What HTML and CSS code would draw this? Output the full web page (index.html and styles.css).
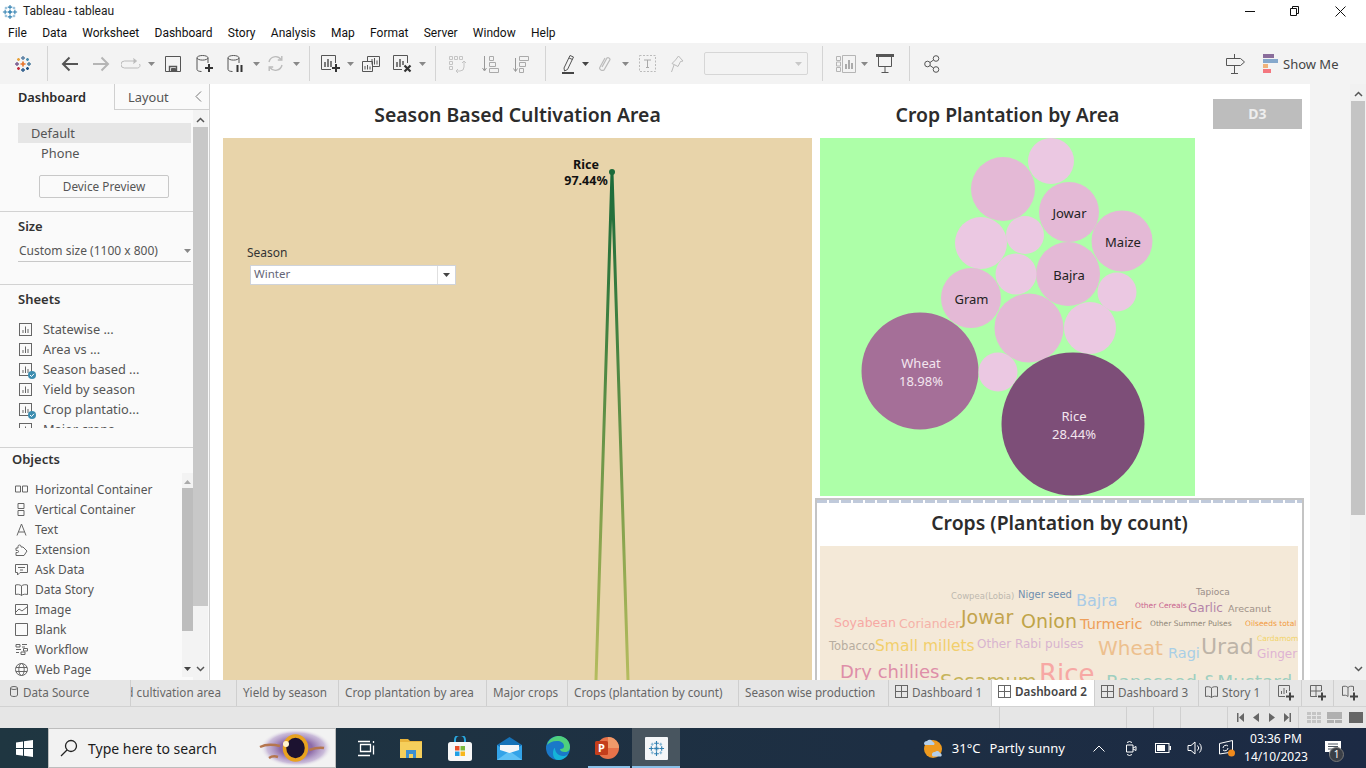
FILE: index.html
```html
<!DOCTYPE html>
<html>
<head>
	<meta charset="utf-8">
	<title>Tableau - tableau</title>
	<link rel="stylesheet" href="styles.css">
</head>
<body>
<svg class="defs" width="0" height="0">
	<symbol id="logo-blue" viewBox="0 0 18 18">
		<g fill="none" stroke="#2f7fb0" stroke-width="1.2">
			<path d="M9 1v5M6.5 3.500h5M9 12v5M6.5 14.500h5M1 9h5M3.500 6.500v5M12 9h5M14.500 6.500v5"/>
			<path d="M9 6.500v5M6.500 9h5" stroke-width="1.6"/>
			<path d="M4.500 3v3M3 4.500h3M13.500 3v3M12 4.500h3M4.500 12v3M3 13.500h3M13.500 12v3M12 13.500h3" stroke="#7fb2d2"/>
		</g>
	</symbol>
	<symbol id="sheet" viewBox="0 0 13 13">
		<rect x=".5" y=".5" width="12" height="12" fill="none" stroke="#666"/>
		<path d="M4 10V7M6.500 10V3.500M9 10V6" fill="none" stroke="#666"/>
	</symbol>
	<symbol id="dash" viewBox="0 0 13 13">
		<rect x=".5" y=".5" width="12" height="12" fill="none" stroke="#666"/>
		<path d="M6.500 1v11M1 6.500h11" fill="none" stroke="#666"/>
	</symbol>
	<symbol id="caret" viewBox="0 0 7 4">
		<path d="M0 0h7L3.500 4z"/>
	</symbol>
	<symbol id="tick" viewBox="0 0 8 8">
		<circle cx="4" cy="4" r="4" fill="#3c8db0"/>
		<path d="M2 4l1.500 1.500L6 2.800" fill="none" stroke="#fff"/>
	</symbol>
</svg>

<div class="titlebar">
	<svg class="title-logo"><use href="#logo-blue"/></svg>
	<span class="title-text">Tableau - tableau</span>
	<span class="win-btns">
		<svg width="10" height="10" viewBox="0 0 10 10"><path d="M0 5.500h10" stroke="#111"/></svg>
		<svg width="10" height="10" viewBox="0 0 10 10"><path d="M.5 2.500h6v7h-6zM2.500 2.500v-2h6v7h-2" fill="none" stroke="#111"/></svg>
		<svg width="11" height="11" viewBox="0 0 11 11"><path d="M.5.500l10 10M10.500.500l-10 10" stroke="#111"/></svg>
	</span>
</div>

<nav class="menubar">
	<span>File</span><span>Data</span><span>Worksheet</span><span>Dashboard</span><span>Story</span><span>Analysis</span><span>Map</span><span>Format</span><span>Server</span><span>Window</span><span>Help</span>
</nav>

<div class="toolbar">
	<span class="ic w30 first">
		<svg width="18" height="18" viewBox="0 0 18 18" fill="none" stroke-width="1.4">
			<path d="M9 1v4M7 3h4" stroke="#5a7fa3"/><path d="M9 13v4M7 15h4" stroke="#2f5d8c"/>
			<path d="M1 9h4M3 7v4" stroke="#7a5c8e"/><path d="M13 9h4M15 7v4" stroke="#4f7f9f"/>
			<path d="M9 6.500v5M6.500 9h5" stroke="#e8762b" stroke-width="1.700"/>
			<path d="M4.500 3v3M3 4.500h3" stroke="#e8a23b"/><path d="M13.500 3v3M12 4.500h3" stroke="#4a8fb0"/>
			<path d="M4.500 12v3M3 13.500h3" stroke="#c72f3f"/><path d="M13.500 12v3M12 13.500h3" stroke="#1f4f7f"/>
		</svg>
	</span>
	<i class="sep m9"></i>
	<span class="ic w30"><svg width="18" height="16" viewBox="0 0 18 16" fill="none" stroke="#555" stroke-width="2"><path d="M17 8H2M8.500 1.500L2 8l6.500 6.500"/></svg></span>
	<span class="ic w32 off"><svg width="18" height="16" viewBox="0 0 18 16" fill="none" stroke="#b5b5b5" stroke-width="2"><path d="M1 8h15M9.500 1.500L16 8l-6.500 6.500"/></svg></span>
	<span class="ic w28 off"><svg width="20" height="12" viewBox="0 0 20 12" fill="none" stroke="#bbb"><path d="M14 3H3.500a2.500 2.500 0 0 0 0 7h13a2.500 2.500 0 0 0 2-4"/><path d="M12.500.500L15.500 3l-3 2.500" fill="#bbb"/></svg></span>
	<span class="ic w12 off"><svg class="dd"><use href="#caret"/></svg></span>
	<span class="ic w32"><svg width="16" height="16" viewBox="0 0 16 16" fill="none" stroke="#555"><path d="M.5.500h15v15H.5z"/><path d="M4.500 15.500v-5h7v5" stroke-width="1.400"/><path d="M6.500 12.500h4v3h-4z" fill="#555"/></svg></span>
	<span class="ic w32"><svg width="18" height="18" viewBox="0 0 18 18" fill="none" stroke="#555"><ellipse cx="6.500" cy="2.800" rx="5.500" ry="2.300"/><path d="M1 3v11.500c0 1.200 2 2 4.500 2M12 3v5"/><path d="M13 9v8M9 13h8" stroke="#333" stroke-width="2"/></svg></span>
	<span class="ic w30"><svg width="18" height="18" viewBox="0 0 18 18" fill="none" stroke="#555"><ellipse cx="6.500" cy="2.800" rx="5.500" ry="2.300"/><path d="M1 3v11.500c0 1.200 2 2 4.500 2M12 3v5"/><path d="M10.500 10v7M14.500 10v7" stroke="#333" stroke-width="2"/></svg></span>
	<span class="ic w10"><svg class="dd"><use href="#caret"/></svg></span>
	<span class="ic w28 off"><svg width="17" height="17" viewBox="0 0 17 17" fill="none" stroke="#bbb" stroke-width="1.400"><path d="M2 7a6.700 6.700 0 0 1 12-2.500M15 10a6.700 6.700 0 0 1-12 2.500"/><path d="M14.800 1v4h-4M2.200 16v-4h4"/></svg></span>
	<span class="ic w14 off"><svg class="dd"><use href="#caret"/></svg></span>
	<i class="sep m6"></i>
	<span class="ic w30"><svg width="20" height="18" viewBox="0 0 20 18" fill="none" stroke="#555"><path d="M10 14.500H.5V.500h14V8"/><path d="M4 12V7M7 12V4M10 12V6" stroke-width="1.500"/><path d="M15 9v8M11 13h8" stroke="#333" stroke-width="2"/></svg></span>
	<span class="ic w8"><svg class="dd"><use href="#caret"/></svg></span>
	<span class="ic w34"><svg width="18" height="16" viewBox="0 0 18 16" fill="none" stroke="#555"><path d="M5.500 5V.500h12v10H11"/><path d="M.500 5.500h10v10H.500z" fill="#f3f3f3"/><path d="M3 13.500V10M5.500 13.500V9M8 13.500v-3M10 8.500V3M12.500 8.500V2M15 8.500V4.500"/></svg></span>
	<span class="ic w28"><svg width="19" height="18" viewBox="0 0 19 18" fill="none" stroke="#555"><path d="M9 14.500H.5V.500h14V8"/><path d="M4 12V7M7 12V4M10 10V6" stroke-width="1.500"/><path d="M11.500 10.500l6 6M17.500 10.500l-6 6" stroke="#333" stroke-width="2.200"/></svg></span>
	<span class="ic w12"><svg class="dd"><use href="#caret"/></svg></span>
	<i class="sep m7"></i>
	<span class="ic w28 off"><svg width="18" height="18" viewBox="0 0 18 18" fill="none" stroke="#c4c4c4"><path d="M1.500 1.500h3v3h-3zM6.500 1.500h3v3h-3zM11.500 1.500h3v3h-3zM1.500 6.500h3v3h-3zM1.500 11.500h3v3h-3z"/><path d="M16 6v6a4 4 0 0 1-4 4H8M14 8l2-2 2 2M10 14l-2 2 2 2"/></svg></span>
	<span class="ic w38 off"><svg width="17" height="18" viewBox="0 0 17 18" fill="none" stroke="#aaa"><path d="M2.500 1v14M.5 13l2 3 2-3" stroke="#999"/><path d="M7.500 1.500h4v4h-4zM7.500 7.500h6v4h-6zM7.500 13.500h9v4h-9z"/></svg></span>
	<span class="ic w24 off"><svg width="17" height="18" viewBox="0 0 17 18" fill="none" stroke="#aaa"><path d="M2.500 3v13M.5 13.500l2 3 2-3" stroke="#999"/><path d="M6.500 1.500h9v4h-9zM6.500 7.500h6v4h-6zM6.500 13.500h4v4h-4z"/></svg></span>
	<i class="sep m11"></i>
	<span class="ic w24"><svg width="14" height="20" viewBox="0 0 14 20" fill="none" stroke="#555"><path d="M3 14L9 1.500 12.500 3 6.500 15.500 3.500 17z"/><path d="M8 4l3.500 1.500"/><path d="M1 19h12" stroke="#444" stroke-width="2"/></svg></span>
	<span class="ic w10"><svg class="dd dark"><use href="#caret"/></svg></span>
	<span class="ic w30 off"><svg width="12" height="18" viewBox="0 0 12 18" fill="none" stroke="#bbb" stroke-width="1.200"><path d="M3 12l5-9a2 2 0 0 1 3 1.500L5 15a3 3 0 0 1-4.500-2L6 3"/></svg></span>
	<span class="ic w10 off"><svg class="dd"><use href="#caret"/></svg></span>
	<span class="ic w34 off"><svg width="17" height="17" viewBox="0 0 17 17" fill="none" stroke="#bbb"><rect x=".5" y=".5" width="16" height="16" stroke-dasharray="2 1.500"/><path d="M5 5h7M8.500 5v7.500M7 12.500h3" stroke="#aaa"/></svg></span>
	<span class="ic w26 off"><svg width="14" height="18" viewBox="0 0 14 18" fill="none" stroke="#bbb"><path d="M8.500 1l4.500 5-2.500.500-2.500 5-6-3 3.500-3.500z"/><path d="M4 10l-2.500 7"/></svg></span>
	<span class="tb-select"><svg class="dd light"><use href="#caret"/></svg></span>
	<i class="sep m14"></i>
	<span class="ic w26 off"><svg width="20" height="18" viewBox="0 0 20 18" fill="none" stroke="#b5b5b5"><path d="M.5 1.500h4v4h-4zM.5 7h4v4h-4zM.5 12.500h4v4h-4z"/><path d="M6.500.500h13v17h-13z"/><path d="M10 14V9M13 14V5M16 14V8" stroke="#999" stroke-width="1.600"/></svg></span>
	<span class="ic w10 off"><svg class="dd"><use href="#caret"/></svg></span>
	<span class="ic w32"><svg width="18" height="19" viewBox="0 0 18 19" fill="none" stroke="#555"><path d="M0 1.500h18" stroke-width="3"/><path d="M2.500 3v9.500h13V3M9 12.500v6M5.500 18.500h7"/></svg></span>
	<i class="sep m8"></i>
	<span class="ic w30 share"><svg width="16" height="18" viewBox="0 0 16 18" fill="none" stroke="#555"><circle cx="3.500" cy="9" r="2.800"/><circle cx="12" cy="3.500" r="2.800"/><circle cx="12" cy="14.500" r="2.800"/><path d="M6 7.500l3.500-2.500M6 10.500l3.500 2.500"/></svg></span>
	<span class="tb-space"></span>
	<span class="ic w30"><svg width="19" height="20" viewBox="0 0 19 20" fill="none" stroke="#555"><path d="M.5 4.500h14l4 3.500-4 3.500H.5z"/><path d="M8.500 0v4.500M8.500 11.500v8M5 19.500h7"/></svg></span>
	<span class="showme">
		<span class="showme-bars"><i class="b1"></i><i class="b2"></i><i class="b3"></i><i class="b4"></i></span>
		Show Me
	</span>
</div>

<div class="main">
	<aside class="side">
		<div class="side-tabs">
			<span class="side-tab active">Dashboard</span>
			<span class="side-tab">Layout</span>
			<svg class="side-chev" width="7" height="11" viewBox="0 0 7 11"><path d="M6 .500L1 5.500l5 5" fill="none" stroke="#777"/></svg>
		</div>
		<div class="side-body">
			<div class="side-main">
				<section class="sec sec-device">
					<div class="dev-row selected">Default</div>
					<div class="dev-row indent">Phone</div>
					<button class="dev-btn">Device Preview</button>
				</section>
				<section class="sec sec-size">
					<h3>Size</h3>
					<div class="size-row">Custom size (1100 x 800)<svg class="dd"><use href="#caret"/></svg></div>
				</section>
				<section class="sec sec-sheets">
					<h3>Sheets</h3>
					<ul class="sheet-list">
						<li><svg class="si"><use href="#sheet"/></svg>Statewise ...</li>
						<li><svg class="si"><use href="#sheet"/></svg>Area vs ...</li>
						<li><span class="si-wrap"><svg class="si"><use href="#sheet"/></svg><svg class="tick"><use href="#tick"/></svg></span>Season based ...</li>
						<li><svg class="si"><use href="#sheet"/></svg>Yield by season</li>
						<li><span class="si-wrap"><svg class="si"><use href="#sheet"/></svg><svg class="tick"><use href="#tick"/></svg></span>Crop plantatio...</li>
						<li><svg class="si"><use href="#sheet"/></svg>Major crops</li>
					</ul>
				</section>
				<section class="sec-objects">
					<h3>Objects</h3>
					<div class="obj-wrap">
						<ul class="obj-list">
							<li><svg width="13" height="13" viewBox="0 0 13 13" fill="none" stroke="#666"><path d="M.5 3h5v6h-5zM7.500 3h5v6h-5z"/></svg>Horizontal Container</li>
							<li><svg width="13" height="13" viewBox="0 0 13 13" fill="none" stroke="#666"><path d="M3 .500h6v5H3zM3 7.500h6v5H3z"/></svg>Vertical Container</li>
							<li><svg width="13" height="13" viewBox="0 0 13 13" fill="none" stroke="#666"><path d="M2 12.500L6.500 1l4.500 11.500M3.500 9h6"/></svg>Text</li>
							<li><svg width="13" height="13" viewBox="0 0 13 13" fill="none" stroke="#666"><path d="M1 5h2V3.500a1.500 1.500 0 0 1 3 0V4h2l4 4-3 4.500H1v-3h1.500a1 1 0 0 0 0-2H1z"/></svg>Extension</li>
							<li><svg width="13" height="13" viewBox="0 0 13 13" fill="none" stroke="#666"><path d="M.5 1.500h12v8H5L2.500 12V9.500h-2zM3 4.500h7M5 7h3"/></svg>Ask Data</li>
							<li><svg width="13" height="13" viewBox="0 0 13 13" fill="none" stroke="#666"><path d="M6.500 3C5 1.500 2.500 1.500.5 2v9.500c2-.5 4.500-.5 6 1 1.500-1.500 4-1.500 6-1V2C10.500 1.500 8 1.500 6.500 3zM6.500 3v9.500"/></svg>Data Story</li>
							<li><svg width="13" height="13" viewBox="0 0 13 13" fill="none" stroke="#666"><path d="M.5 1.500h12v10H.5zM1 9l3-3 3 2 5-4"/></svg>Image</li>
							<li><svg width="13" height="13" viewBox="0 0 13 13" fill="none" stroke="#666"><path d="M.5.500h12v12H.5z"/></svg>Blank</li>
							<li><svg width="13" height="13" viewBox="0 0 13 13" fill="none" stroke="#666"><path d="M1 1.500h4v2.500H1zM7 1.500h5M7 4h3M1 6.500h5M8.500 5.500h4v2.500h-4zM1 9.500h3M6 9h4v2.500H6z"/></svg>Workflow</li>
							<li><svg width="13" height="13" viewBox="0 0 13 13" fill="none" stroke="#666"><circle cx="6.500" cy="6.500" r="6"/><ellipse cx="6.500" cy="6.500" rx="2.700" ry="6"/><path d="M1 4.500h11M1 8.500h11"/></svg>Web Page</li>
						</ul>
						<div class="obj-scroll">
							<svg class="dd up"><use href="#caret"/></svg>
							<i class="obj-thumb"></i>
							<svg class="dd dark"><use href="#caret"/></svg>
						</div>
					</div>
				</section>
			</div>
			<div class="side-scroll">
				<svg width="9" height="6" viewBox="0 0 9 6"><path d="M1 5l3.500-3.500L8 5" fill="none" stroke="#555" stroke-width="1.500"/></svg>
				<i class="side-thumb"></i>
				<svg width="9" height="6" viewBox="0 0 9 6"><path d="M1 1l3.500 3.500L8 1" fill="none" stroke="#555" stroke-width="1.500"/></svg>
			</div>
		</div>
	</aside>

	<div class="canvas">
		<div class="col-left">
			<h2 class="viz-title">Season Based Cultivation Area</h2>
			<div class="beige">
				<svg class="line-chart" width="589" height="542" viewBox="0 0 589 542">
					<defs>
						<linearGradient id="lineGrad" gradientUnits="userSpaceOnUse" x1="0" y1="34" x2="0" y2="542">
							<stop offset="0" stop-color="#1b6a3a"/>
							<stop offset=".3" stop-color="#3f8040"/>
							<stop offset=".7" stop-color="#86a34e"/>
							<stop offset="1" stop-color="#b5bc5e"/>
						</linearGradient>
					</defs>
					<polyline points="373,542 389,34 405,542" fill="none" stroke="url(#lineGrad)" stroke-width="3"/>
					<circle cx="389" cy="34" r="3" fill="#1b6a3a"/>
					<text class="peak" x="363" y="31" text-anchor="middle">Rice</text>
					<text class="peak" x="363" y="47" text-anchor="middle">97.44%</text>
				</svg>
				<div class="filter">
					<div class="filter-label">Season</div>
					<div class="filter-box"><span>Winter</span><i class="filter-btn"><svg class="dd dark"><use href="#caret"/></svg></i></div>
				</div>
			</div>
		</div>
		<div class="col-right">
			<div class="right-top">
				<div class="bubble-col">
					<h2 class="viz-title">Crop Plantation by Area</h2>
					<svg class="bubbles" width="375" height="358" viewBox="820 138 375 358">
						<circle class="light" cx="1051" cy="161" r="23"/>
						<circle class="mid" cx="1003" cy="189" r="32"/>
						<circle class="mid" cx="1069" cy="212" r="30"/>
						<circle class="mid" cx="1122" cy="241" r="30.500"/>
						<circle class="light" cx="981" cy="243" r="26"/>
						<circle class="light" cx="1025" cy="235" r="19"/>
						<circle class="mid" cx="1068" cy="274" r="32"/>
						<circle class="light" cx="1016" cy="274" r="20.500"/>
						<circle class="light" cx="1117" cy="292" r="19.500"/>
						<circle class="mid" cx="971" cy="298" r="30"/>
						<circle class="mid" cx="1029" cy="328" r="34.500"/>
						<circle class="light" cx="1090" cy="328" r="26"/>
						<circle class="wheat" cx="920" cy="371" r="58.500"/>
						<circle class="light" cx="998" cy="372" r="19.500"/>
						<circle class="rice" cx="1073" cy="424" r="71.500"/>
						<text class="bub" x="1069.500" y="217.500">Jowar</text>
						<text class="bub" x="1123" y="246.500">Maize</text>
						<text class="bub" x="1069" y="279.500">Bajra</text>
						<text class="bub" x="971.500" y="303.500">Gram</text>
						<text class="bub inv" x="921" y="368">Wheat</text>
						<text class="bub inv" x="921" y="386">18.98%</text>
						<text class="bub inv" x="1074" y="421">Rice</text>
						<text class="bub inv" x="1074" y="439">28.44%</text>
					</svg>
				</div>
				<div class="d3-btn">D3</div>
			</div>
			<div class="cloud-box">
				<div class="ticks"></div>
				<h2 class="viz-title cloud-title">Crops (Plantation by count)</h2>
				<svg class="cloud" width="478" height="134" viewBox="820 546 478 134">
					<text x="951" y="599" font-size="8.500" fill="#bdb8ae">Cowpea(Lobia)</text>
					<text x="1018" y="598" font-size="10" fill="#6f8fae">Niger seed</text>
					<text x="1076" y="606" font-size="16" fill="#a9cbe6">Bajra</text>
					<text x="1196" y="595" font-size="9" fill="#9a8e88">Tapioca</text>
					<text x="1135" y="608" font-size="7.500" fill="#c9648f">Other Cereals</text>
					<text x="1188" y="612" font-size="12" fill="#b383a8">Garlic</text>
					<text x="1228" y="612" font-size="9.500" fill="#9f9188">Arecanut</text>
					<text x="834" y="627" font-size="12.500" fill="#f7a8a4">Soyabean</text>
					<text x="899" y="628" font-size="12.500" fill="#f4b2a8">Coriander</text>
					<text x="961" y="624" font-size="19" fill="#c3a44e">Jowar</text>
					<text x="1021" y="628" font-size="19" fill="#bfa448">Onion</text>
					<text x="1080" y="629" font-size="14.500" fill="#ee9f5a">Turmeric</text>
					<text x="1150" y="626" font-size="7.500" fill="#8f8677">Other Summer Pulses</text>
					<text x="1245" y="626" font-size="7.500" fill="#f29a3e">Oilseeds total</text>
					<text x="829" y="650" font-size="11.500" fill="#b7ada0">Tobacco</text>
					<text x="875" y="651" font-size="15.500" fill="#f2cf6c">Small millets</text>
					<text x="977" y="648" font-size="12" fill="#d8b4cf">Other Rabi pulses</text>
					<text x="1098" y="655" font-size="20" fill="#edc08e">Wheat</text>
					<text x="1168" y="658" font-size="14.500" fill="#a9cfe6">Ragi</text>
					<text x="1201" y="654" font-size="22" fill="#bdb4a8">Urad</text>
					<text x="1257" y="641" font-size="7.500" fill="#f2d46a">Cardamom</text>
					<text x="1257" y="658" font-size="12" fill="#deb3d3">Ginger</text>
					<text x="840" y="678" font-size="18" fill="#de8ea8">Dry chillies</text>
					<text x="940" y="688" font-size="19.500" fill="#c6b45a">Sesamum</text>
					<text x="1039" y="683" font-size="26" fill="#f7a8a4">Rice</text>
					<text x="1106" y="688" font-size="18.500" fill="#9fcfc0">Rapeseed &amp;Mustard</text>
				</svg>
			</div>
		</div>
	</div>

	<div class="gutter"></div>
	<div class="page-scroll">
		<svg width="9" height="6" viewBox="0 0 9 6"><path d="M1 5l3.500-3.500L8 5" fill="none" stroke="#555" stroke-width="1.500"/></svg>
		<i class="page-thumb"></i>
		<svg width="9" height="6" viewBox="0 0 9 6"><path d="M1 1l3.500 3.500L8 1" fill="none" stroke="#555" stroke-width="1.500"/></svg>
	</div>
</div>

<div class="tabs">
	<div class="tab tab-ds"><svg width="8" height="11" viewBox="0 0 8 11" fill="none" stroke="#666"><ellipse cx="4" cy="2" rx="3.500" ry="1.500"/><path d="M.5 2v7c0 2 7 2 7 0V2"/></svg>Data Source</div>
	<div class="tab tab-clip">Season based cultivation area</div>
	<div class="tab">Yield by season</div>
	<div class="tab">Crop plantation by area</div>
	<div class="tab">Major crops</div>
	<div class="tab">Crops (plantation by count)</div>
	<div class="tab">Season wise production</div>
	<div class="tab"><svg class="tab-ic"><use href="#dash"/></svg>Dashboard 1</div>
	<div class="tab current"><svg class="tab-ic"><use href="#dash"/></svg>Dashboard 2</div>
	<div class="tab"><svg class="tab-ic"><use href="#dash"/></svg>Dashboard 3</div>
	<div class="tab"><svg width="13" height="13" viewBox="0 0 13 13" fill="none" stroke="#666"><path d="M6.500 3C5 1.500 2.500 1.500.5 2v9.500c2-.5 4.500-.5 6 1 1.500-1.500 4-1.500 6-1V2C10.500 1.500 8 1.500 6.500 3zM6.500 3v9.500"/></svg>Story 1</div>
	<div class="tab tab-add"><svg width="16" height="16" viewBox="0 0 16 16" fill="none" stroke="#666"><path d="M7 11.500H.5V.500h11V6"/><path d="M3.500 9V6M6 9V3M8.500 8V5"/><path d="M12 7.500v8M8 11.500h8" stroke="#444" stroke-width="2"/></svg></div>
	<div class="tab tab-add"><svg width="16" height="16" viewBox="0 0 16 16" fill="none" stroke="#666"><path d="M7 11.500H.5V.500h11V6M6 1v10M1 6h10"/><path d="M12 7.500v8M8 11.500h8" stroke="#444" stroke-width="2"/></svg></div>
	<div class="tab tab-add"><svg width="16" height="16" viewBox="0 0 16 16" fill="none" stroke="#666"><path d="M6 2.500C4.500 1 2.500 1 .5 1.500v9c2-.5 4-.5 5.500 1M6 2.500C7.500 1 9.500 1 11.500 1.500V6M6 2.500v9"/><path d="M12 7.500v8M8 11.500h8" stroke="#444" stroke-width="2"/></svg></div>
</div>

<div class="status">
	<div></div><div></div><div></div><div></div><div></div>
	<div class="st-nav">
		<svg width="7" height="9" viewBox="0 0 7 9"><path d="M0 0h1.500v9H0zM7 0v9L2 4.500z" fill="#666"/></svg>
		<svg width="6" height="9" viewBox="0 0 6 9"><path d="M6 0v9L0 4.500z" fill="#666"/></svg>
		<svg width="6" height="9" viewBox="0 0 6 9"><path d="M0 0v9l6-4.500z" fill="#666"/></svg>
		<svg width="7" height="9" viewBox="0 0 7 9"><path d="M0 0v9l5-4.500zM5.500 0H7v9H5.500z" fill="#666"/></svg>
	</div>
	<div class="st-view">
		<svg width="14" height="11" viewBox="0 0 14 11" fill="#c4c4c4"><path d="M0 0h4v3H0zM5 0h4v3H5zM10 0h4v3h-4zM0 4h4v3H0zM5 4h4v3H5zM10 4h4v3h-4zM0 8h4v3H0zM5 8h4v3H5zM10 8h4v3h-4z"/></svg>
		<svg width="15" height="11" viewBox="0 0 15 11" fill="#b0b0b0"><path d="M0 0h15v7H0zM0 8h7v3H0zM8 8h7v3H8z"/></svg>
		<i class="view-full"></i>
	</div>
</div>

<footer class="taskbar">
	<span class="start">
		<svg width="17" height="17" viewBox="0 0 17 17" fill="#fff"><path d="M0 2.400l7-1v6.700H0zM8 1.300L17 0v8.100H8zM0 9h7v6.700l-7-1zM8 9h9v8l-9-1.300z"/></svg>
	</span>
	<div class="search">
		<svg width="18" height="18" viewBox="0 0 18 18" fill="none" stroke="#222" stroke-width="1.300"><circle cx="11" cy="7" r="5.500"/><path d="M7 11l-6 6"/></svg>
		<span>Type here to search</span>
		<svg class="bing" width="73" height="38" viewBox="0 0 73 38">
			<defs>
				<radialGradient id="bingHalo">
					<stop offset=".45" stop-color="#8d6ba8"/>
					<stop offset=".8" stop-color="#b9a4cf" stop-opacity=".7"/>
					<stop offset="1" stop-color="#f2f2f2" stop-opacity="0"/>
				</radialGradient>
			</defs>
			<ellipse cx="37" cy="19" rx="36" ry="19" fill="url(#bingHalo)"/>
			<path d="M1 18c6-3 12-3 20-1M50 21c6-2 10-3 15-2M10 29c3-2 6-2 9-1" stroke="#b5764f" stroke-width="2.500" fill="none"/>
			<ellipse cx="36.500" cy="19" rx="11" ry="12" fill="#1c1230" stroke="#e9a21f" stroke-width="3.500"/>
			<circle cx="27" cy="15" r="3" fill="#fff3cf"/>
		</svg>
	</div>
	<span class="tb-app w-task">
		<svg width="18" height="17" viewBox="0 0 18 17" fill="none" stroke="#fff"><path d="M3.500 4.500h10v7h-10zM1 1.500h12M1 15.500h12M16.500 1v2M16.500 5.500v9" stroke-width="1.300"/></svg>
	</span>
	<span class="tb-app w-folder">
		<svg width="22" height="20" viewBox="0 0 22 20"><path d="M0 1h8l2 2h12v4H0z" fill="#e8b33a"/><path d="M0 4h22v16H0z" fill="#f5cf5c"/><path d="M6 12h10v8H6z" fill="#3d8fd1"/><path d="M9 16h4v4H9z" fill="#f5cf5c"/></svg>
	</span>
	<span class="tb-app w-store">
		<svg width="24" height="25" viewBox="0 0 24 25"><path d="M7 7V4a5 5 0 0 1 10 0v3" fill="none" stroke="#29a8e0" stroke-width="2"/><rect y="6" width="24" height="19" rx="2.500" fill="#f7f7f7"/><path d="M7 10h4.500v4.500H7z" fill="#e8502a"/><path d="M12.500 10H17v4.500h-4.500z" fill="#7cb83b"/><path d="M7 15.500h4.500V20H7z" fill="#1fa0e6"/><path d="M12.500 15.500H17V20h-4.500z" fill="#f8b71c"/></svg>
	</span>
	<span class="tb-app w-mail">
		<svg width="25" height="23" viewBox="0 0 25 23"><path d="M0 8L12.500 0 25 8v15H0z" fill="#1572b8"/><path d="M0 8l12.500 8L25 8v15H0z" fill="#33a3e8"/><path d="M0 23l12.500-9L25 23z" fill="#5fc1f5"/><path d="M3 8h19v5l-9.500 3L3 13z" fill="#f4f6f8"/></svg>
	</span>
	<span class="tb-app w-edge">
		<svg width="24" height="24" viewBox="0 0 24 24"><circle cx="12" cy="12" r="12" fill="#1a78c8"/><path d="M1 9C3 2 9 0 13 0c6 0 11 5 11 11 0 3-2 5-5 5-3 0-5-1-5-3 3 0 4-1 4-3C18 7 15 5 11 5 6 5 3 7 1 9z" fill="#4fd07d"/><path d="M9 12c0 4 3 8 8 8 2 0 4-.5 5-2-2 4-6 6-10 6-3 0-5-3-5-7 0-3 1-5 2-5z" fill="#15b3d8"/></svg>
	</span>
	<span class="tb-app w-ppt">
		<svg width="24" height="24" viewBox="0 0 24 24"><circle cx="13" cy="12" r="11" fill="#e8734a"/><path d="M13 1a11 11 0 0 1 11 11H13z" fill="#f09a6a"/><rect y="5" width="13" height="14" rx="1.500" fill="#c43e1c"/><text class="ppt-p" x="6.500" y="16">P</text></svg>
	</span>
	<span class="tb-app w-tab">
		<svg class="tab-logo" width="23" height="23" viewBox="0 0 23 23"><rect width="23" height="23" rx="1" fill="#f4f6f8"/><use href="#logo-blue" x="3" y="3" width="17" height="17"/></svg>
	</span>
	<span class="tb-fill"></span>
	<span class="weather">
		<svg width="20" height="22" viewBox="0 0 20 22"><circle cx="10" cy="12" r="9" fill="#ee9a1f"/><path d="M1 7a3 3 0 0 1 3-3 3.500 3.500 0 0 1 6 1 2 2 0 0 1 1 3H2a2 2 0 0 1-1-1z" fill="#b5cfe8"/><path d="M9 18a2.500 2.500 0 0 1 3-3 3 3 0 0 1 5 1 2 2 0 0 1 1 3.500h-8a2 2 0 0 1-1-1.500z" fill="#b5cfe8"/></svg>
		<span class="w-temp">31°C</span><span class="w-desc">Partly sunny</span>
	</span>
	<span class="tray t-up"><svg width="12" height="7" viewBox="0 0 12 7"><path d="M.5 6.500L6 1l5.500 5.500" fill="none" stroke="#fff"/></svg></span>
	<span class="tray t-meet"><svg width="12" height="17" viewBox="0 0 12 17" fill="none" stroke="#fff"><path d="M1.500 5h6.500v7H1.500zM8 8l3-1.500v4L8 9M2 2.500Q4.500.500 7 2.500M2 14.500q2.500 2 5 0"/></svg></span>
	<span class="tray t-batt"><svg width="16" height="10" viewBox="0 0 16 10"><rect x=".5" y=".5" width="13.500" height="9" fill="none" stroke="#fff"/><rect x="2" y="2" width="8" height="6" fill="#fff"/><path d="M14.500 3H16v4h-1.500z" fill="#fff"/></svg></span>
	<span class="tray t-vol"><svg width="16" height="14" viewBox="0 0 16 14" fill="none" stroke="#fff"><path d="M1 4.500h3L8 1v12L4 9.500H1zM10.500 4.500a3.500 3.500 0 0 1 0 5M12.500 2.500a6.500 6.500 0 0 1 0 9"/></svg></span>
	<span class="tray t-net"><svg width="16" height="17" viewBox="0 0 16 17"><path d="M.5 3.500L13.500.500v11.500L.5 14z" fill="none" stroke="#fff"/><path d="M4 8a3 3 0 0 1 5-2M9 8a3 3 0 0 1-5 2" fill="none" stroke="#fff"/><circle cx="12.500" cy="13" r="3.500" fill="#f08a1c"/></svg></span>
	<span class="clock"><span>03:36 PM</span><span>14/10/2023</span></span>
	<span class="notif">
		<svg width="16" height="15" viewBox="0 0 16 15"><path d="M0 0h16v11H7l-3 4v-4H0z" fill="#fff"/><path d="M3 3h10M3 5.500h10M3 8h7" stroke="#4a5560"/></svg>
		<i class="notif-badge">1</i>
	</span>
</footer>
</body>
</html>
```

FILE: styles.css
```css
* { box-sizing: border-box; }

html, body {
	margin: 0;
	padding: 0;
	width: 1366px;
	height: 768px;
	overflow: hidden;
}

body {
	display: flex;
	flex-direction: column;
	font-family: "Noto Sans", "Open Sans", sans-serif;
	background: #fff;
}

.defs { position: absolute; }

i { font-style: normal; display: block; }

h2, h3, ul { margin: 0; padding: 0; }
ul { list-style: none; }

/* caret used all over */
.dd { width: 7px; height: 4px; fill: #888; flex: none; }
.dd.dark { fill: #444; }
.dd.light { fill: #c8c8c8; }
.dd.up { transform: rotate(180deg); fill: #aaa; }

/* title bar */
.titlebar {
	height: 22px;
	display: flex;
	align-items: center;
	flex: none;
}
.title-logo { width: 16px; height: 16px; margin: 1px 0 0 2px; }
.title-text { margin-left: 5px; font: 12px Roboto, sans-serif; color: #222; }
.win-btns {
	margin-left: auto;
	display: flex;
	align-items: center;
	gap: 35px;
	padding-right: 20px;
}

/* menu */
.menubar {
	height: 21px;
	display: flex;
	align-items: center;
	gap: 15.300px;
	padding-left: 8px;
	font: 12px Roboto, sans-serif;
	color: #111;
	flex: none;
}

/* toolbar */
.toolbar {
	height: 41px;
	background: #f3f3f3;
	display: flex;
	align-items: center;
	flex: none;
}
.ic { display: flex; align-items: center; justify-content: center; flex: none; height: 30px; }
.ic.first { margin-left: 8px; }
.w8 { width: 8px; }
.w10 { width: 10px; }
.w12 { width: 12px; }
.w14 { width: 14px; }
.w24 { width: 24px; }
.w26 { width: 26px; }
.w28 { width: 28px; }
.w30 { width: 30px; }
.w32 { width: 32px; }
.w34 { width: 34px; }
.w38 { width: 38px; }

.sep { width: 1px; height: 35px; background: #d4d4d4; flex: none; }
.sep.m6 { margin: 0 6px; }
.sep.m7 { margin: 0 7px; }
.sep.m8 { margin: 0 7px 0 8px; }
.sep.m9 { margin: 0 7px 0 9px; }
.sep.m11 { margin: 0 10px 0 12px; }
.sep.m14 { margin: 0 10px 0 14px; }

.tb-select {
	width: 104px;
	height: 23px;
	margin-left: 14px;
	border: 1px solid #d6d6d6;
	border-radius: 2px;
	display: flex;
	align-items: center;
	justify-content: flex-end;
	padding-right: 5px;
}
.tb-space { flex: 1; }
.showme {
	display: flex;
	align-items: center;
	gap: 5px;
	width: 90px;
	margin-left: 13px;
	margin-right: 13px;
	font-size: 13px;
	color: #444;
}
.showme-bars { display: flex; flex-direction: column; gap: 1px; width: 15px; }
.showme-bars i { height: 4px; }
.b1 { width: 11px; background: #8a6d9b; }
.b2 { width: 15px; background: #86a8cc; }
.b3 { width: 5px; background: #f0b27a; }
.b4 { width: 8px; background: #f4777f; }

/* middle part */
.main { height: 596px; display: flex; flex: none; }

.side {
	width: 210px;
	background: #fafafa;
	border-right: 1px solid #cfcfcf;
	display: flex;
	flex-direction: column;
	flex: none;
	color: #555;
	font-size: 12.800px;
}
.side-tabs { height: 26px; display: flex; align-items: center; position: relative; flex: none; }
.side-tab { height: 26px; display: flex; align-items: center; }
.side-tab.active { width: 114px; padding-left: 18px; font-weight: 600; color: #2a2a2a; font-size: 12.800px; }
.side-tab:not(.active) {
	flex: 1;
	padding-left: 13px;
	border-left: 1px solid #d0d0d0;
	border-bottom: 1px solid #d0d0d0;
}
.side-chev { position: absolute; right: 7px; top: 7px; }

.side-body { flex: 1; display: flex; min-height: 0; }
.side-main { width: 193px; flex: none; }

.sec { border-bottom: 1px solid #d2d2d2; }
.sec h3, .sec-objects h3 {
	font-size: 13px;
	font-weight: 600;
	color: #333;
	height: 20px;
	line-height: 20px;
}
.sec-device { height: 102px; padding-top: 13px; }
.dev-row { height: 20px; line-height: 20px; margin-left: 18px; margin-right: 2px; padding-left: 13px; }
.dev-row.selected { background: #e6e6e6; }
.dev-row.indent { padding-left: 23px; }
.dev-btn {
	display: block;
	width: 130px;
	height: 23px;
	margin: 12px 0 0 39px;
	background: #fafafa;
	border: 1px solid #c8c8c8;
	border-radius: 2px;
	font: 11.800px "Noto Sans", sans-serif;
	color: #555;
	padding: 0 0 2px;
}
.sec-size { height: 73px; padding: 4px 0 0 18px; }
.size-row {
	height: 22px;
	margin: 4px 2px 0 0;
	border-bottom: 1px solid #c8c8c8;
	display: flex;
	align-items: center;
	justify-content: space-between;
	font-size: 12px;
	padding-left: 1px;
}
.sec-sheets { height: 163px; padding: 4px 0 0 18px; }
.sheet-list { margin-top: 10px; height: 109px; overflow: hidden; }
.sheet-list li { height: 20px; display: flex; align-items: center; }
.si { width: 13px; height: 13px; margin: 0 11px 0 1px; flex: none; }
.si-wrap { position: relative; display: flex; }
.tick {
	position: absolute;
	left: 10px;
	top: 8px;
	width: 8px;
	height: 8px;
}

.sec-objects { padding: 1px 0 0 12px; }
.obj-wrap { display: flex; height: 204px; margin-top: 4px; }
.obj-list { padding: 6px 0 0 3px; width: 170px; flex: none; }
.obj-list li { height: 20px; display: flex; align-items: center; gap: 7px; white-space: nowrap; font-size: 12px; }
.obj-list svg { flex: none; }
.obj-scroll {
	width: 11px;
	display: flex;
	flex-direction: column;
	align-items: center;
	background: #f3f3f3;
	padding: 7px 0 6px;
}
.obj-thumb { width: 11px; height: 143px; background: #bdbdbd; margin: 4px 0 auto; }

.side-scroll {
	width: 15px;
	display: flex;
	flex-direction: column;
	align-items: center;
	background: #f3f3f3;
	padding: 7px 0 8px;
}
.side-thumb { width: 15px; height: 479px; background: #c8c8c8; margin: 4px 0 auto; }

/* dashboard */
.canvas {
	width: 1100px;
	background: #fff;
	display: flex;
	padding-left: 13px;
	overflow: hidden;
	flex: none;
}
.col-left { width: 589px; flex: none; }
.col-right { width: 489px; margin-left: 3px; flex: none; }

.viz-title {
	height: 54px;
	padding-top: 8px;
	line-height: 46px;
	text-align: center;
	font-size: 19.400px;
	font-weight: 600;
	color: #2c2c2c;
}

.beige { position: relative; height: 542px; background: #e8d4aa; }
.line-chart { display: block; }
.peak { font-size: 12.500px; font-weight: 700; fill: #111; }

.filter { position: absolute; left: 24px; top: 107px; }
.filter-label { font-size: 12px; color: #333; height: 16px; line-height: 16px; }
.filter-box {
	width: 206px;
	height: 20px;
	margin: 4px 0 0 3px;
	background: #fff;
	border: 1px solid #cfd3da;
	display: flex;
	align-items: center;
	justify-content: space-between;
	font-size: 11.500px;
	line-height: 14px;
	color: #667;
	padding-left: 3px;
}
.filter-box span { margin-top: -2px; }
.filter-btn {
	width: 18px;
	height: 18px;
	border-left: 1px solid #e0e0e0;
	display: flex;
	align-items: center;
	justify-content: center;
}

.right-top { display: flex; padding-left: 5px; height: 412px; }
.bubble-col { width: 375px; flex: none; }
.bubbles { display: block; background: #adffa8; }
.light { fill: #ebc8e2; }
.mid { fill: #e4b9d6; }
.wheat { fill: #a56f98; }
.rice { fill: #7d4e78; }
.bub { font-size: 13px; fill: #222; text-anchor: middle; }
.bub.inv { fill: #f3e6ef; }

.d3-btn {
	width: 89px;
	height: 30px;
	margin: 15px 0 0 18px;
	background: #bdbdbd;
	color: #eee;
	font-size: 14px;
	font-weight: 700;
	line-height: 30px;
	text-align: center;
}

.cloud-box {
	height: 200px;
	margin-top: 2px;
	border: 2px solid #c4c4c4;
	border-bottom: 0;
}
.ticks {
	height: 3px;
	background: repeating-linear-gradient(90deg, #c0cadb 0 10px, #fff 10px 12px);
}
.cloud-title { height: 43px; padding-top: 0; line-height: 39px; }
.cloud { display: block; margin-left: 3px; background: #f4e9d8; }
.cloud text { font-family: "DejaVu Sans", sans-serif; }

.gutter { width: 40px; background: #f3f3f3; flex: none; }
.page-scroll {
	width: 16px;
	background: #f1f1f1;
	display: flex;
	flex-direction: column;
	align-items: center;
	padding: 7px 0 8px;
	flex: none;
}
.page-thumb { width: 14px; height: 414px; background: #c4c4c4; margin: 4px 0 auto; }

/* sheet tabs */
.tabs {
	height: 27px;
	display: grid;
	grid-template-columns: 130px 106px 102px 148px 81px 171px 150px 103px 103px 104px 71px 32px 32px 33px;
	background: #e6e6e6;
	border-bottom: 1px solid #d2d2d2;
	flex: none;
}
.tab {
	display: flex;
	align-items: center;
	gap: 4px;
	padding: 0 0 3px 6px;
	border-left: 1px solid #cfcfcf;
	font-size: 11.700px;
	color: #666;
	white-space: nowrap;
	overflow: hidden;
}
.tab-ds { border-left: 0; padding-left: 10px; gap: 5px; }
.tab-clip { justify-content: flex-end; padding-right: 15px; padding-left: 0; }
.tab-add { justify-content: center; padding-left: 0; padding-bottom: 0; }
.tab-ic { width: 13px; height: 13px; flex: none; }
.tab.current { background: #fff; color: #444; font-weight: 600; height: 26px; padding-bottom: 4px; }

/* status bar */
.status {
	height: 21px;
	display: grid;
	grid-template-columns: 999px 127px 27px 27px 47px 71px 68px;
	background: #e6e6e6;
	flex: none;
}
.status > div + div { border-left: 1px solid #d0d0d0; }
.st-nav { display: flex; align-items: center; justify-content: space-between; padding: 0 7px 0 9px; }
.st-view { display: flex; align-items: center; gap: 6px; padding-left: 8px; }
.view-full { width: 14px; height: 11px; background: #666; margin-left: 1px; }

/* windows taskbar */
.taskbar {
	height: 40px;
	background: linear-gradient(90deg, #1f3641, #1c2a44);
	display: flex;
	align-items: center;
	color: #fff;
	flex: none;
}
.start { width: 48px; display: flex; justify-content: center; flex: none; }
.search {
	width: 288px;
	height: 40px;
	background: #f2f2f2;
	border: 1px solid #bdbdbd;
	display: flex;
	align-items: center;
	padding-left: 11px;
	position: relative;
	color: #1c1c1c;
	font-size: 14px;
	flex: none;
}
.search span { margin-left: 10px; }
.bing { position: absolute; right: 3px; top: 0; }
.tb-app {
	height: 40px;
	display: flex;
	align-items: center;
	justify-content: center;
	flex: none;
	position: relative;
}
.w-task { width: 60px; }
.w-folder { width: 30px; }
.w-store { width: 48px; margin-left: 10px; }
.w-mail { width: 50px; }
.w-edge { width: 48px; }
.w-ppt { width: 50px; }
.w-ppt::after, .w-tab::after {
	content: "";
	position: absolute;
	left: 0;
	right: 0;
	bottom: 0;
	height: 2px;
	background: #8ac0e8;
}
.w-ppt::after { left: 6px; right: 2px; }
.w-tab { width: 48px; background: #48555f; }
.ppt-p { font-size: 11px; font-weight: 700; fill: #fff; text-anchor: middle; }
.tb-fill { flex: 1; }
.weather { display: flex; align-items: center; font-size: 13px; margin-right: 18px; }
.w-temp { margin-left: 9px; }
.w-desc { margin-left: 9px; }
.tray { width: 32px; display: flex; justify-content: center; flex: none; }
.clock {
	width: 68px;
	margin-left: -1px;
	font-size: 12px;
	display: flex;
	flex-direction: column;
	align-items: center;
	line-height: 18px;
}
.notif { position: relative; width: 32px; margin: 0 17px 0 7px; display: flex; justify-content: center; }
.notif-badge {
	position: absolute;
	left: 12px;
	top: 6px;
	width: 15px;
	height: 15px;
	border-radius: 50%;
	background: #3a3f47;
	border: 1px solid #777;
	font-size: 10px;
	line-height: 13px;
	text-align: center;
	color: #fff;
}
```
